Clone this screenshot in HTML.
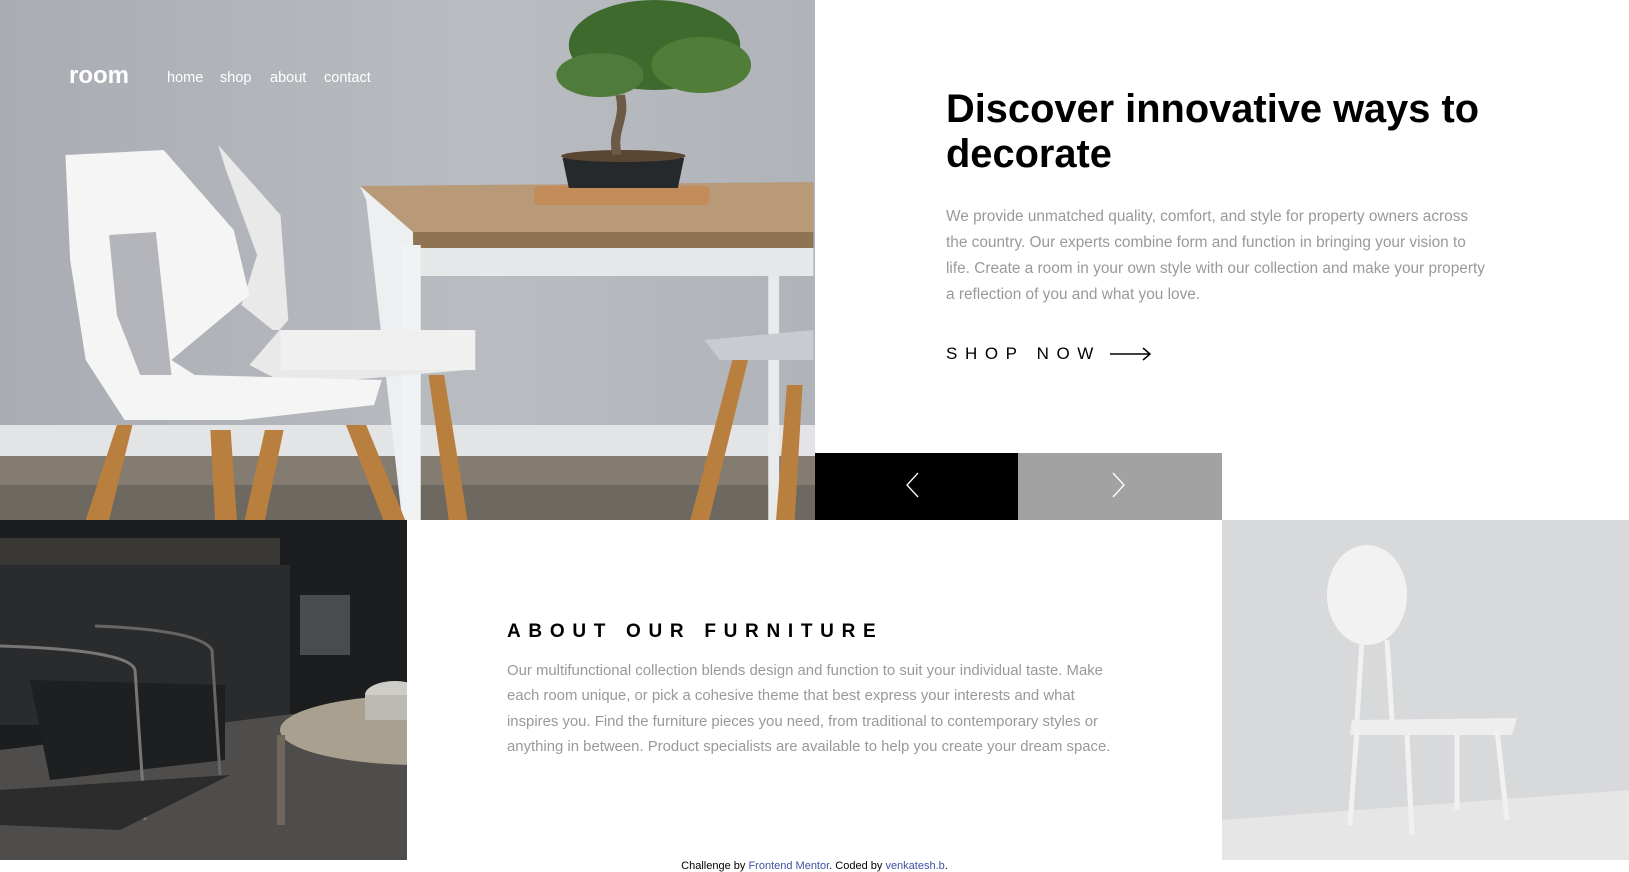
<!DOCTYPE html>
<html><head><meta charset="utf-8"><style>
*{margin:0;padding:0;box-sizing:border-box}
body{width:1629px;height:872px;overflow:hidden;background:#fff;font-family:"Liberation Sans",Arial,sans-serif;position:relative}
.abs{position:absolute}
.nav{color:#fff;font-size:14.5px;top:70px}
h1{position:absolute;left:946px;top:87px;font-size:39.8px;line-height:45px;font-weight:bold;color:#000;width:570px}
.p1{left:946px;top:204px;width:546px;font-size:15.4px;line-height:26px;color:#999}
.shop{left:946px;top:344px;font-size:17px;letter-spacing:7.6px;color:#000}
h2{position:absolute;left:507px;top:621px;font-size:19px;letter-spacing:7.7px;font-weight:bold;color:#000}
.p2{left:507px;top:659px;width:620px;font-size:14.9px;line-height:25.3px;color:#999}
.foot{left:0;width:1629px;text-align:center;top:860px;font-size:11px;color:#000}
.foot a{color:#3e52a3}
</style></head><body>

<svg class="abs" style="left:0;top:0" width="815" height="520" viewBox="0 0 523 520" preserveAspectRatio="none">
<defs><linearGradient id="w" x1="0" y1="0" x2="1" y2="0"><stop offset="0" stop-color="#a9acb2"/><stop offset="0.6" stop-color="#b9bcc1"/><stop offset="1" stop-color="#b0b3b8"/></linearGradient></defs>
<rect width="523" height="520" fill="url(#w)"/>
<rect y="425" width="523" height="32" fill="#e3e4e6"/>
<rect y="456" width="523" height="64" fill="#857c71"/>
<rect y="485" width="523" height="35" fill="#6d6961"/>
<polygon points="231,186 522,182 522,232 265,232" fill="#b89a78"/>
<rect x="265" y="232" width="257" height="16" fill="#8f7454"/>
<rect x="265" y="248" width="257" height="28" fill="#e6e7e9"/>
<polygon points="231,186 265,232 268,520 258,520 235,200" fill="#eeeff0"/>
<rect x="258" y="245" width="12" height="275" fill="#f1f2f3"/>
<rect x="493" y="276" width="7" height="244" fill="#e9eaeb"/>
<rect x="343" y="186" width="112" height="19" rx="3" fill="#c38a5a"/>
<polygon points="361,158 439,158 435,188 365,188" fill="#25292c"/>
<ellipse cx="400" cy="156" rx="40" ry="6" fill="#5a4532"/>
<path d="M396,155 C392,130 402,120 398,95" stroke="#6b5a45" stroke-width="6" fill="none"/>
<ellipse cx="420" cy="45" rx="55" ry="45" fill="#3e6a2e"/>
<ellipse cx="385" cy="75" rx="28" ry="22" fill="#4f7c3a"/>
<ellipse cx="450" cy="65" rx="32" ry="28" fill="#507d38"/>
<polygon points="140,145 180,215 185,320 160,365 185,385 300,370 305,330 175,330 155,305 165,255 145,170" fill="#e9e9ea"/>
<polygon points="42,155 105,150 150,230 160,295 110,360 125,375 245,380 240,405 155,420 80,420 55,360 45,260" fill="#f5f5f5"/>
<polygon points="70,235 100,232 110,375 90,375 75,315" fill="#b3b5ba"/>
<rect x="180" y="330" width="125" height="40" fill="#f0f0f1"/>
<g fill="#b97f3e">
<polygon points="75,425 85,425 70,520 55,520"/>
<polygon points="135,430 148,430 152,520 138,520"/>
<polygon points="170,430 182,430 170,520 157,520"/>
<polygon points="222,425 235,425 260,520 246,520"/>
<polygon points="275,375 285,375 300,520 288,520"/>
<polygon points="470,360 480,360 455,520 443,520"/>
<polygon points="505,385 515,385 510,520 498,520"/>
</g>
<polygon points="452,340 522,330 522,360 462,360" fill="#c9cbd0"/>
</svg>

<div class="abs" style="left:69px;top:62px;font-size:24px;font-weight:bold;color:#fff">room</div>
<div class="abs nav" style="left:167px">home</div>
<div class="abs nav" style="left:220px">shop</div>
<div class="abs nav" style="left:270px">about</div>
<div class="abs nav" style="left:324px">contact</div>

<h1>Discover innovative ways to decorate</h1>
<div class="abs p1">We provide unmatched quality, comfort, and style for property owners across the country. Our experts combine form and function in bringing your vision to life. Create a room in your own style with our collection and make your property a reflection of you and what you love.</div>
<div class="abs shop">SHOP NOW</div>
<svg class="abs" style="left:1110px;top:347px" width="42" height="14"><path d="M0 7H40M33 1L40 7L33 13" stroke="#000" stroke-width="1.5" fill="none"/></svg>

<div class="abs" style="left:815px;top:453px;width:203px;height:67px;background:#000"></div>
<div class="abs" style="left:1018px;top:453px;width:204px;height:67px;background:#a2a2a2"></div>
<svg class="abs" style="left:905px;top:471px" width="20" height="30"><path d="M13 2L2 14L13 26" stroke="#fff" stroke-width="1.3" fill="none"/></svg>
<svg class="abs" style="left:1110px;top:471px" width="20" height="30"><path d="M3 2L14 14L3 26" stroke="#fff" stroke-width="1.3" fill="none"/></svg>

<svg class="abs" style="left:0;top:520px" width="407" height="340" viewBox="0 0 407 340">
<rect width="407" height="340" fill="#1c1d1f"/>
<rect y="18" width="280" height="30" fill="#3a3835"/>
<rect y="45" width="290" height="160" fill="#2a2b2d"/>
<rect x="300" y="75" width="50" height="60" fill="#4a4b4d"/>
<polygon points="0,230 407,180 407,340 0,340" fill="#4e4d4b"/>
<polygon points="30,160 225,165 225,240 50,260" fill="#1e1f21"/>
<path d="M0 126 Q130 130 135 150 L145 300" stroke="#777" stroke-width="3" fill="none"/>
<path d="M95 106 Q200 110 212 130 L220 255" stroke="#666" stroke-width="3" fill="none"/>
<polygon points="0,270 230,255 120,310 0,305" fill="#2c2c2c"/>
<ellipse cx="420" cy="210" rx="140" ry="35" fill="#a9a08f"/>
<rect x="277" y="215" width="8" height="90" fill="#6f675b"/>
<ellipse cx="395" cy="175" rx="30" ry="14" fill="#cfcdc7"/>
<rect x="365" y="175" width="42" height="25" fill="#bdbab3"/>
</svg>

<svg class="abs" style="left:1222px;top:520px" width="407" height="340" viewBox="0 0 407 340">
<rect width="407" height="340" fill="#d8d9db"/>
<polygon points="0,300 407,270 407,340 0,340" fill="#e6e6e7"/>
<ellipse cx="145" cy="75" rx="40" ry="50" fill="#f2f2f2"/>
<polygon points="130,200 295,198 290,215 128,215" fill="#eeeeef"/>
<g stroke="#f1f1f2" stroke-width="5">
<line x1="140" y1="120" x2="135" y2="200"/><line x1="165" y1="120" x2="170" y2="200"/>
<line x1="135" y1="210" x2="128" y2="305"/><line x1="185" y1="215" x2="190" y2="315"/>
<line x1="275" y1="210" x2="285" y2="300"/><line x1="235" y1="215" x2="235" y2="290"/>
</g>
</svg>

<div class="abs" style="left:407px;top:520px;width:815px;height:340px;background:#fff"></div>
<h2>ABOUT OUR FURNITURE</h2>
<div class="abs p2">Our multifunctional collection blends design and function to suit your individual taste. Make each room unique, or pick a cohesive theme that best express your interests and what inspires you. Find the furniture pieces you need, from traditional to contemporary styles or anything in between. Product specialists are available to help you create your dream space.</div>

<div class="abs foot">Challenge by <a>Frontend Mentor</a>. Coded by <a>venkatesh.b</a>.</div>
</body></html>
